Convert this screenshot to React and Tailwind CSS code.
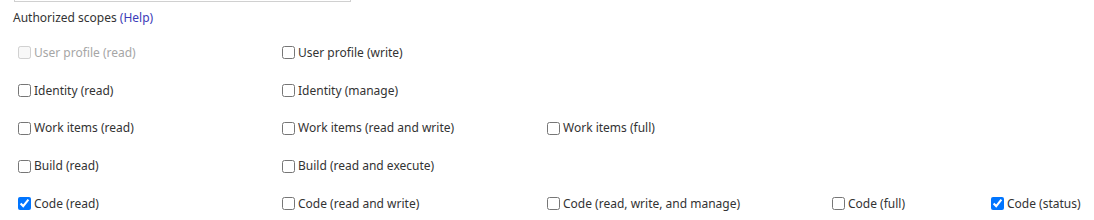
import React from "react";

const rows = [
  [{ t: "User profile (read)", disabled: true }, { t: "User profile (write)" }],
  [{ t: "Identity (read)" }, { t: "Identity (manage)" }],
  [{ t: "Work items (read)" }, { t: "Work items (read and write)" }, { t: "Work items (full)" }],
  [{ t: "Build (read)" }, { t: "Build (read and execute)" }],
  [
    { t: "Code (read)", checked: true },
    { t: "Code (read and write)" },
    { t: "Code (read, write, and manage)" },
    { t: "Code (full)" },
    { t: "Code (status)", checked: true },
  ],
];

const widths = ["w-[264px]", "w-[265px]", "w-[285px]", "w-[159px]", "w-[100px]"];

function Item({ t, disabled, checked, w }) {
  return (
    <label className={`${w} shrink-0 flex items-center ${disabled ? "text-[#a6a6a6]" : "text-[#333333]"}`}>
      <input
        type="checkbox"
        defaultChecked={checked}
        disabled={disabled}
        className="m-0 ml-[4px] mr-[3px] w-[13px] h-[13px] accent-[#0075ff]"
      />
      <span className="whitespace-nowrap">{t}</span>
    </label>
  );
}

export default function App() {
  return (
    <div
      className="bg-white w-[1094px] h-[220px] overflow-hidden text-[12px] leading-[16px]"
      style={{ fontFamily: '"Segoe UI", "Noto Sans", "Open Sans", sans-serif' }}
    >
      <div className="ml-[14px] w-[337px] h-[2px] border-x border-b border-[#d0d0d0]" />
      <div className="mt-[8px] ml-[13px] text-[#333333]">
        Authorized scopes <span className="text-[#3b3bb8]">(</span>
        <span className="text-[#3b3bb8]">Help</span>
        <span className="text-[#3b3bb8]">)</span>
      </div>
      <div className="mt-[8px] ml-[14px] flex flex-col">
        {rows.map((r, i) => (
          <div key={i} className="h-[37.75px] flex items-center">
            {r.map((it, j) => (
              <Item key={j} {...it} w={widths[j]} />
            ))}
          </div>
        ))}
      </div>
    </div>
  );
}
